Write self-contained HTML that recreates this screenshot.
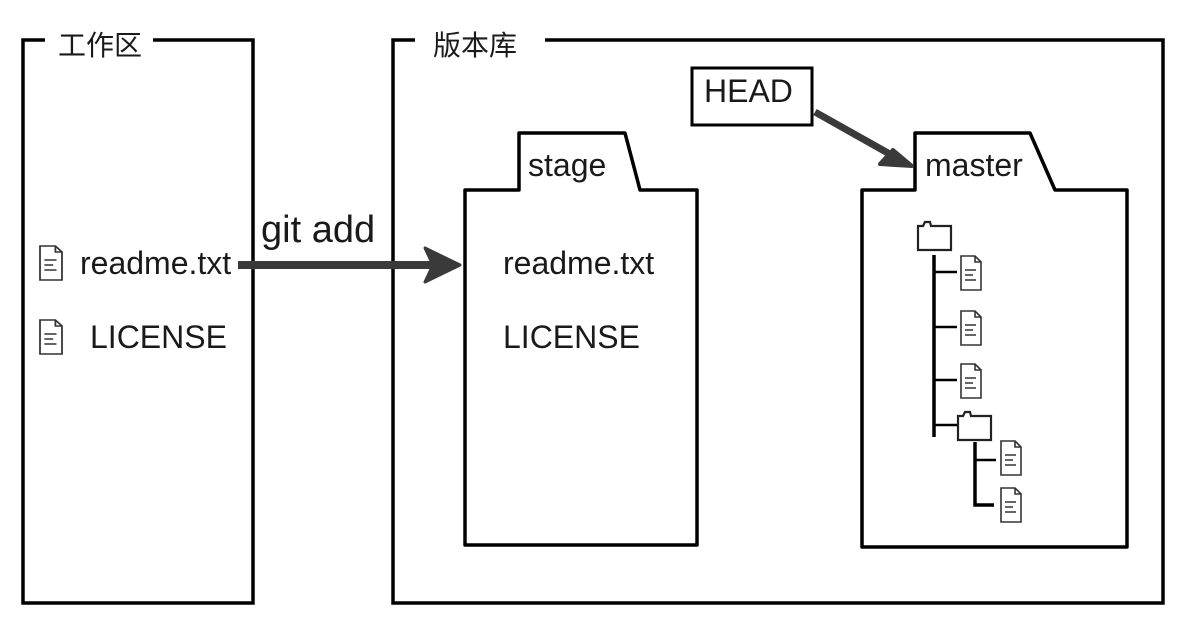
<!DOCTYPE html>
<html><head><meta charset="utf-8"><style>
html,body{margin:0;padding:0;background:#fff;}
svg{display:block}
text{font-family:"Liberation Sans","Noto Sans CJK SC",sans-serif;fill:#1a1a1a}
</style></head><body>
<svg width="1185" height="617" viewBox="0 0 1185 617" xmlns="http://www.w3.org/2000/svg">
<defs>
<g id="file" fill="#fff" stroke="#333" stroke-width="1.6">
<path d="M0 0 H14 L20 6 V34 H0 Z"/>
<path d="M14 0 V6 H20" fill="none"/>
<path d="M4 14 H15 M4 19 H12 M4 24 H15" fill="none"/>
</g>
<g id="folder" fill="#fff" stroke="#222" stroke-width="2.2">
<path d="M1 6 H6 L8 2 H13 L14 6 H34 V30 H1 Z"/>
</g>
</defs>
<path d="M45 40 H23 V603 H253 V40 H153" fill="none" stroke="#000" stroke-width="3.5"/>
<text x="58" y="55" font-size="28">工作区</text>
<path d="M415 40 H393 V603 H1163 V40 H545" fill="none" stroke="#000" stroke-width="3.5"/>
<text x="433" y="55" font-size="28">版本库</text>
<rect x="692" y="68" width="120" height="57" fill="#fff" stroke="#000" stroke-width="3"/>
<text x="704" y="102" font-size="32">HEAD</text>
<path d="M465 545 V190 H519 V133 H625 L640 190 H697 V545 Z" fill="#fff" stroke="#000" stroke-width="3.5" stroke-linejoin="round"/>
<text x="528" y="176" font-size="32">stage</text>
<text x="503" y="274" font-size="32">readme.txt</text>
<text x="503" y="348" font-size="32">LICENSE</text>
<path d="M862 547 V190 H915 V133 H1030 L1055 190 H1127 V547 Z" fill="#fff" stroke="#000" stroke-width="3.5" stroke-linejoin="round"/>
<text x="925" y="176" font-size="32">master</text>
<path d="M815 112 L895 157" stroke="#3a3a3a" stroke-width="7"/>
<path d="M912 166 L880 164 L893 150 Z" fill="#3a3a3a" stroke="#3a3a3a" stroke-width="4" stroke-linejoin="round"/>
<g transform="translate(40,246) scale(1.1,1)"><use href="#file"/></g>
<text x="80" y="274" font-size="32">readme.txt</text>
<g transform="translate(40,320) scale(1.1,1)"><use href="#file"/></g>
<text x="90" y="348" font-size="32">LICENSE</text>
<text x="261" y="242" font-size="38">git add</text>
<path d="M238 265 H440" stroke="#3a3a3a" stroke-width="8"/>
<path d="M460 265 L425 248 L433 265 L425 282 Z" fill="#3a3a3a" stroke="#3a3a3a" stroke-width="3" stroke-linejoin="round"/>
<use href="#folder" x="917" y="220"/>
<path d="M934 255 V437" stroke="#000" stroke-width="3.5"/>
<path d="M934 272 H957 M934 327 H957 M934 380 H957 M934 425 H957" stroke="#000" stroke-width="2.5"/>
<use href="#file" x="961" y="256"/>
<use href="#file" x="961" y="311"/>
<use href="#file" x="961" y="364"/>
<use href="#folder" x="957" y="410"/>
<path d="M975 442 V505 H994" fill="none" stroke="#000" stroke-width="3.5"/>
<path d="M975 460 H996" stroke="#000" stroke-width="2.5"/>
<use href="#file" x="1001" y="441"/>
<use href="#file" x="1001" y="488"/>
</svg>
</body></html>
